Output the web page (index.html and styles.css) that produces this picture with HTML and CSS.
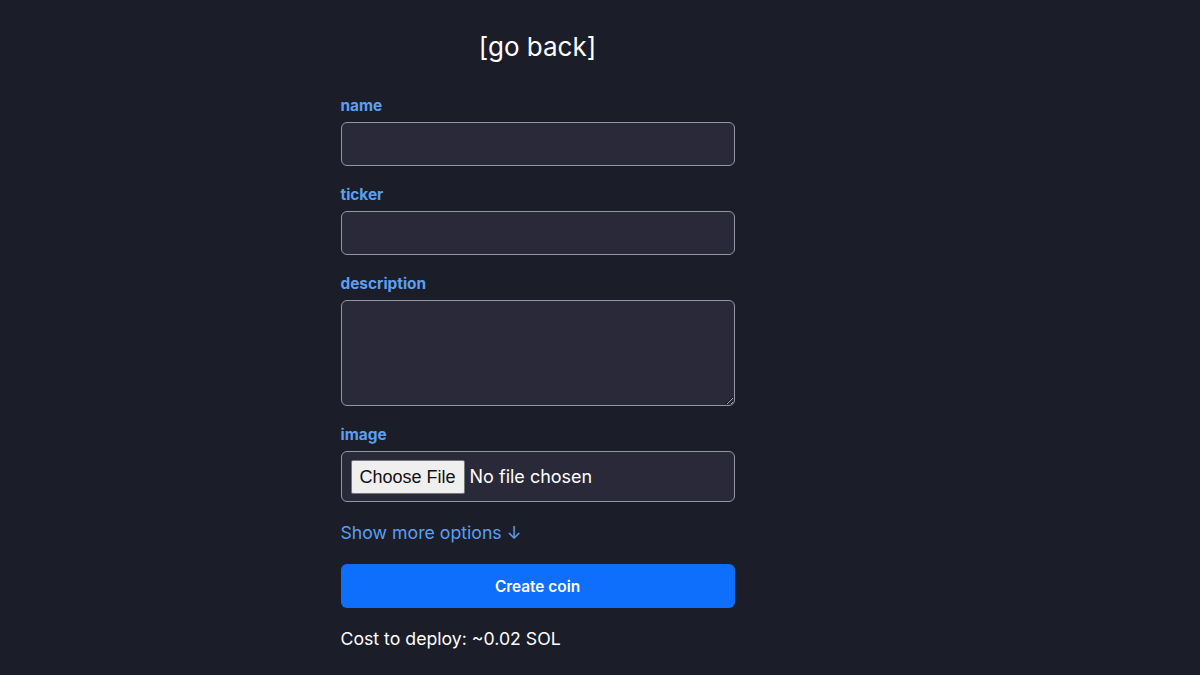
FILE: index.html
```html
<!DOCTYPE html>
<html lang="en">
<head>
<meta charset="utf-8">
<title>Create coin</title>
<link rel="stylesheet" href="styles.css">
</head>
<body>
<div class="page">
  <div class="header"><a class="back" href="#">[go back]</a></div>
  <form class="form">
    <div class="field">
      <label class="label" for="name">name</label>
      <input class="input" id="name" type="text">
    </div>
    <div class="field">
      <label class="label" for="ticker">ticker</label>
      <input class="input" id="ticker" type="text">
    </div>
    <div class="field">
      <label class="label" for="desc">description</label>
      <textarea class="input textarea" id="desc"></textarea>
    </div>
    <div class="field">
      <label class="label" for="image">image</label>
      <input class="input file" id="image" type="file">
    </div>
    <div class="more">Show more options ↓</div>
    <button class="submit" type="button">Create coin</button>
    <div class="cost">Cost to deploy: ~0.02 SOL</div>
  </form>
</div>
</body>
</html>
```
FILE: styles.css
```css
html, body {
  margin: 0;
  padding: 0;
  background: #1b1d28;
  height: 100%;
}
body {
  font-family: Inter, "Noto Sans", sans-serif;
  color: #ffffff;
}
.page {
  width: 1075px;
  padding-top: 31px;
}
.header {
  text-align: center;
  margin: 0 auto 30px;
  width: 394px;
  height: 32px;
}
.back {
  color: #ffffff;
  text-decoration: none;
  font-size: 26px;
  line-height: 32px;
}
.form {
  width: 394px;
  margin: 0 auto;
  display: flex;
  flex-direction: column;
  gap: 16px;
}
.field {
  display: flex;
  flex-direction: column;
  gap: 4px;
}
.label {
  color: #5c9ff2;
  font-weight: 700;
  font-size: 15.4px;
  line-height: 24px;
  padding-top: 1px;
}
.input {
  box-sizing: border-box;
  width: 100%;
  height: 44px;
  background: #2a2939;
  border: 1px solid #9496a3;
  border-radius: 6px;
  color: #ffffff;
  font-family: Inter, sans-serif;
  font-size: 16px;
  padding: 8px;
  outline: none;
  margin: 0;
}
.textarea {
  height: 106px;
  resize: vertical;
  display: block;
}
.file {
  height: 51px;
  font-size: 18px;
  padding: 8px 9px;
}
.file::file-selector-button {
  font-size: 18px;
  font-family: "Liberation Sans", Arial, sans-serif;
  background: #efefef;
  color: #111;
  border: 1px solid #767676;
  border-radius: 2px;
  padding: 4px 8px;
  margin-right: 5px;
  height: 34px;
}
.more {
  color: #5c9ff2;
  font-size: 17.7px;
  line-height: 28px;
  padding-top: 1px;
}
.submit {
  height: 44px;
  background: #0e6ffd;
  color: #ffffff;
  border: none;
  border-radius: 6px;
  font-family: Inter, sans-serif;
  font-weight: 600;
  font-size: 15.4px;
  margin-top: 1px;
}
.cost {
  font-size: 17.7px;
  line-height: 28px;
  padding-top: 1px;
}
```
